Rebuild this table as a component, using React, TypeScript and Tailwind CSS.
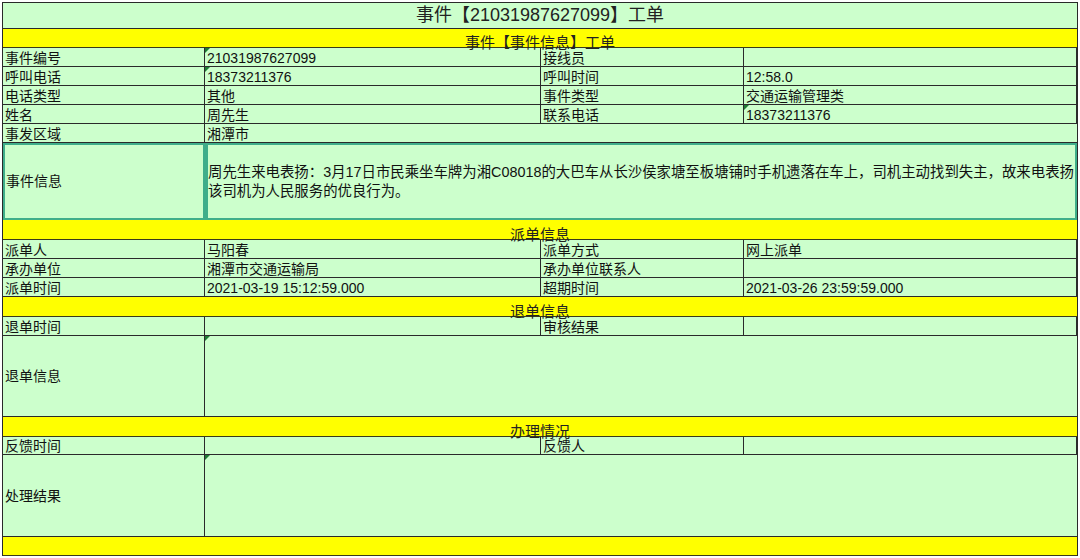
const font = { fontFamily: '"Liberation Sans", "Noto Sans CJK SC", sans-serif' };

function Tri() {
  return (
    <span className="absolute left-0 top-0 w-0 h-0 border-t-[5px] border-r-[5px] border-t-[#1e7b34] border-r-transparent" />
  );
}

function Cell({
  children,
  w,
  flag,
  className = "",
}: {
  children?: React.ReactNode;
  w: string;
  flag?: boolean;
  className?: string;
}) {
  return (
    <div
      className={`relative ${w} h-full border-r border-[#2a2a2a] pl-[2px] flex items-end pb-px leading-none whitespace-nowrap ${className}`}
    >
      {flag && <Tri />}
      {children}
    </div>
  );
}

function Row4({
  a,
  b,
  c,
  d,
  fb,
  fd,
  h = "h-[19px]",
}: {
  a: string;
  b?: string;
  c: string;
  d?: string;
  fb?: boolean;
  fd?: boolean;
  h?: string;
}) {
  return (
    <div className={`flex ${h} border-b border-[#2a2a2a]`}>
      <Cell w="w-[202px]">{a}</Cell>
      <Cell w="w-[336px]" flag={fb}>
        {b}
      </Cell>
      <Cell w="w-[203px]">{c}</Cell>
      <Cell w="flex-1" flag={fd}>
        {d}
      </Cell>
    </div>
  );
}

function Row2({ a, b, h = "h-[19px]", tall }: { a: string; b?: string; h?: string; tall?: boolean }) {
  return (
    <div className={`flex ${h} border-b border-[#2a2a2a]`}>
      <div
        className={`w-[202px] h-full border-r border-[#2a2a2a] pl-[2px] flex ${
          tall ? "items-center" : "items-end pb-px"
        } leading-none`}
      >
        {a}
      </div>
      <div className="relative flex-1 h-full pl-[2px] flex items-end pb-px leading-none">
        {tall && <Tri />}
        {b}
      </div>
    </div>
  );
}

function Band({ text, h = "h-[20px]" }: { text?: string; h?: string }) {
  return (
    <div
      className={`${h} bg-[#ffff00] border-b border-[#3a3a1a] flex items-end justify-center text-[15px] leading-none text-[#222]`}
    >
      <span className="translate-y-[3px]">{text}</span>
    </div>
  );
}

export default function App() {
  return (
    <div className="w-[1080px] h-[558px] bg-white pt-[2px] pl-[2px]" style={font}>
      <div className="w-[1076px] bg-[#ccffcc] border-t border-l border-r border-[#2a2a2a] text-[14px] text-[#111]">
        <div className="h-[26px] border-b border-[#2a2a2a] flex items-center justify-center text-[18px] text-[#222]">
          事件【21031987627099】工单
        </div>
        <Band text="事件【事件信息】工单" h="h-[19px]" />
        <Row4 a="事件编号" b="21031987627099" c="接线员" fb />
        <Row4 a="呼叫电话" b="18373211376" c="呼叫时间" d="12:58.0" fb />
        <Row4 a="电话类型" b="其他" c="事件类型" d="交通运输管理类" />
        <Row4 a="姓名" b="周先生" c="联系电话" d="18373211376" fd />
        <Row2 a="事发区域" b="湘潭市" />
        <div className="flex h-[77px]">
          <div className="w-[202px] h-full border-2 border-[#3fae8a] pl-[1px] flex items-center">
            事件信息
          </div>
          <div className="flex-1 h-full border-2 border-l-[3px] border-[#3fae8a] flex flex-col justify-center leading-[19px] whitespace-nowrap text-[14.4px]">
            <div>
              周先生来电表扬：3月17日市民乘坐车牌为湘C08018的大巴车从长沙侯家塘至板塘铺时手机遗落在车上，司机主动找到失主，故来电表扬
            </div>
            <div>该司机为人民服务的优良行为。</div>
          </div>
        </div>
        <Band text="派单信息" />
        <Row4 a="派单人" b="马阳春" c="派单方式" d="网上派单" />
        <Row4 a="承办单位" b="湘潭市交通运输局" c="承办单位联系人" />
        <Row4 a="派单时间" b="2021-03-19 15:12:59.000" c="超期时间" d="2021-03-26 23:59:59.000" />
        <Band text="退单信息" />
        <Row4 a="退单时间" c="审核结果" />
        <Row2 a="退单信息" h="h-[81px]" tall />
        <Band text="办理情况" />
        <Row4 a="反馈时间" c="反馈人" h="h-[18px]" />
        <Row2 a="处理结果" h="h-[82px]" tall />
        <Band h="h-[19px]" />
      </div>
    </div>
  );
}
